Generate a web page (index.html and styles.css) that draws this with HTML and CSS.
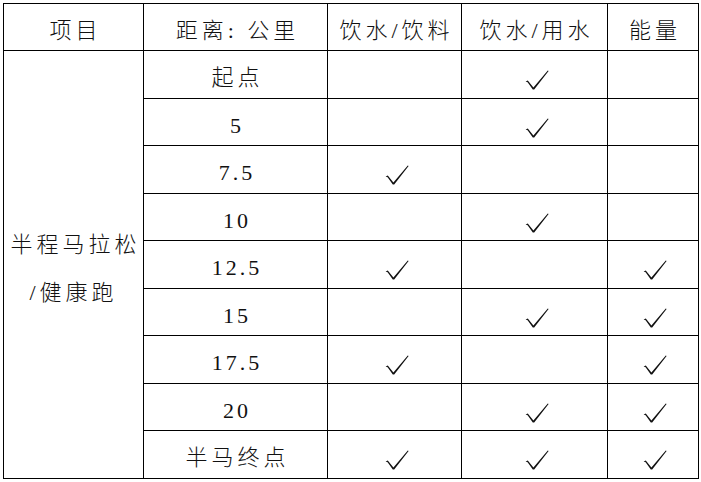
FILE: index.html
```html
<!DOCTYPE html>
<html lang="zh">
<head>
<meta charset="utf-8">
<link rel="stylesheet" href="styles.css">
</head>
<body>
<svg width="0" height="0" class="defs">
  <defs>
    <g id="ck">
      <path d="M0.6 11.6 L2.8 10.4 L8.4 17.6 L22.8 0.4 L23.6 1.1 L9.2 19.4 L7.8 19.4 L2.6 12.2 Z" fill="#111"/>
    </g>
  </defs>
</svg>
<table class="grid">
  <colgroup>
    <col class="c1"><col class="c2"><col class="c3"><col class="c4"><col class="c5">
  </colgroup>
  <tr class="head">
    <td>项目</td><td>距离: 公里</td><td>饮水/饮料</td><td>饮水/用水</td><td>能量</td>
  </tr>
  <tr>
    <td rowspan="9" class="event">半程马拉松<br>/健康跑</td>
    <td>起点</td><td></td><td><svg class="ck" viewBox="0 0 24 20"><use href="#ck"/></svg></td><td></td>
  </tr>
  <tr><td class="num">5</td><td></td><td><svg class="ck" viewBox="0 0 24 20"><use href="#ck"/></svg></td><td></td></tr>
  <tr><td class="num">7.5</td><td><svg class="ck" viewBox="0 0 24 20"><use href="#ck"/></svg></td><td></td><td></td></tr>
  <tr><td class="num">10</td><td></td><td><svg class="ck" viewBox="0 0 24 20"><use href="#ck"/></svg></td><td></td></tr>
  <tr><td class="num">12.5</td><td><svg class="ck" viewBox="0 0 24 20"><use href="#ck"/></svg></td><td></td><td><svg class="ck" viewBox="0 0 24 20"><use href="#ck"/></svg></td></tr>
  <tr><td class="num">15</td><td></td><td><svg class="ck" viewBox="0 0 24 20"><use href="#ck"/></svg></td><td><svg class="ck" viewBox="0 0 24 20"><use href="#ck"/></svg></td></tr>
  <tr><td class="num">17.5</td><td><svg class="ck" viewBox="0 0 24 20"><use href="#ck"/></svg></td><td></td><td><svg class="ck" viewBox="0 0 24 20"><use href="#ck"/></svg></td></tr>
  <tr><td class="num">20</td><td></td><td><svg class="ck" viewBox="0 0 24 20"><use href="#ck"/></svg></td><td><svg class="ck" viewBox="0 0 24 20"><use href="#ck"/></svg></td></tr>
  <tr><td>半马终点</td><td><svg class="ck" viewBox="0 0 24 20"><use href="#ck"/></svg></td><td><svg class="ck" viewBox="0 0 24 20"><use href="#ck"/></svg></td><td><svg class="ck" viewBox="0 0 24 20"><use href="#ck"/></svg></td></tr>
</table>
</body>
</html>
```
FILE: styles.css
```css
html, body {
  margin: 0;
  padding: 0;
  background: #fff;
}
.defs {
  position: absolute;
  width: 0;
  height: 0;
}
.grid {
  margin: 3px 0 0 3px;
  border-collapse: collapse;
  table-layout: fixed;
  width: 695px;
  font-family: "Liberation Serif", "Noto Sans CJK SC", serif;
  font-size: 22px;
  font-weight: 300;
  color: #111;
}
.c1 { width: 140px; }
.c2 { width: 184px; }
.c3 { width: 134px; }
.c4 { width: 146px; }
.c5 { width: 91px; }
.grid td {
  border: 1px solid #000;
  height: 47.5px;
  padding: 8px 0 0 0;
  box-sizing: border-box;
  text-align: center;
  vertical-align: middle;
  letter-spacing: 4px;
  text-indent: 4px;
  line-height: 26px;
  white-space: nowrap;
}
.grid .head td {
  height: 47px;
}
.grid td.num {
  letter-spacing: 3px;
  text-indent: 3px;
}
.grid td.event {
  line-height: 48px;
  padding-top: 10px;
}
.ck {
  width: 24px;
  height: 20px;
  display: inline-block;
  vertical-align: middle;
}
```
